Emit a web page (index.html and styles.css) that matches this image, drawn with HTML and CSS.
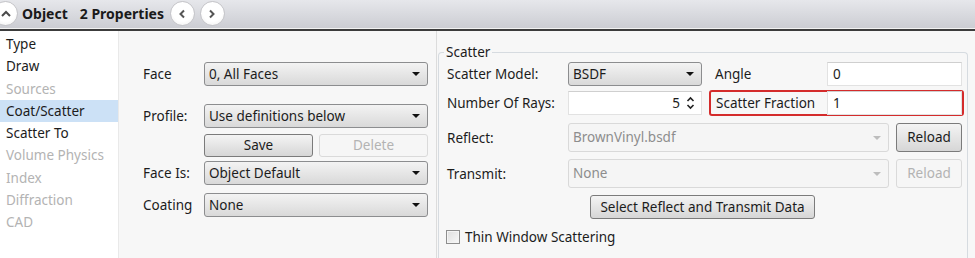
FILE: index.html
```html
<!DOCTYPE html>
<html>
<head>
<meta charset="utf-8">
<link rel="stylesheet" href="styles.css">
</head>
<body>
<header class="titlebar">
  <span class="circ up"><svg width="12" height="8" viewBox="0 0 12 8"><polyline points="2,6 6,2 10,6" fill="none" stroke="#4a4a4a" stroke-width="2"/></svg></span>
  <span class="t-obj">Object</span>
  <span class="t-props">2 Properties</span>
  <span class="circ nav"><svg width="8" height="10" viewBox="0 0 8 10"><polyline points="6,1.5 2.5,5 6,8.5" fill="none" stroke="#555" stroke-width="2"/></svg></span>
  <span class="circ nav"><svg width="8" height="10" viewBox="0 0 8 10"><polyline points="2,1.5 5.5,5 2,8.5" fill="none" stroke="#555" stroke-width="2"/></svg></span>
</header>
<div class="main">
  <nav class="side">
    <div class="item">Type</div>
    <div class="item">Draw</div>
    <div class="item off">Sources</div>
    <div class="item sel">Coat/Scatter</div>
    <div class="item">Scatter To</div>
    <div class="item off">Volume Physics</div>
    <div class="item off">Index</div>
    <div class="item off">Diffraction</div>
    <div class="item off">CAD</div>
  </nav>
  <section class="face">
    <div class="frow r-face"><span class="flabel">Face</span><div class="combo w224">0, All Faces<i class="tri"></i></div></div>
    <div class="frow r-profile"><span class="flabel">Profile:</span><div class="combo w224">Use definitions below<i class="tri"></i></div></div>
    <div class="frow r-btns"><span class="flabel"></span><div class="btn save">Save</div><div class="btn dis del">Delete</div></div>
    <div class="frow r-faceis"><span class="flabel">Face Is:</span><div class="combo w224">Object Default<i class="tri"></i></div></div>
    <div class="frow r-coat"><span class="flabel">Coating</span><div class="combo w224">None<i class="tri"></i></div></div>
  </section>
  <section class="scatter">
    <fieldset class="group">
      <legend>Scatter</legend>
      <div class="srow s1">
        <span class="slabel">Scatter Model:</span>
        <div class="combo w134">BSDF<i class="tri"></i></div>
        <span class="alabel">Angle</span>
        <div class="field w135">0</div>
      </div>
      <div class="srow s2">
        <span class="slabel">Number Of Rays:</span>
        <div class="field num w134"><span class="nval">5</span><svg class="spin" width="9" height="14" viewBox="0 0 9 14"><polyline points="1.5,5 4.5,2 7.5,5" fill="none" stroke="#222" stroke-width="1.6"/><polyline points="1.5,9 4.5,12 7.5,9" fill="none" stroke="#222" stroke-width="1.6"/></svg></div>
        <div class="redbox">
          <span class="rlabel">Scatter Fraction</span>
          <div class="field w135">1</div>
        </div>
      </div>
      <div class="srow s3">
        <span class="slabel">Reflect:</span>
        <div class="combo dis w321">BrownVinyl.bsdf<i class="tri"></i></div>
        <div class="btn reload">Reload</div>
      </div>
      <div class="srow s4">
        <span class="slabel">Transmit:</span>
        <div class="combo dis w321">None<i class="tri"></i></div>
        <div class="btn dis reload">Reload</div>
      </div>
      <div class="srow s5">
        <div class="btn select">Select Reflect and Transmit Data</div>
      </div>
      <div class="srow s6">
        <span class="check"></span><span class="clabel">Thin Window Scattering</span>
      </div>
    </fieldset>
  </section>
</div>
</body>
</html>
```
FILE: styles.css
```css
* { box-sizing: border-box; }
html, body { margin: 0; padding: 0; }
body {
  width: 975px;
  height: 258px;
  overflow: hidden;
  font-family: "Noto Sans", "Open Sans", sans-serif;
  font-size: 13.5px;
  color: #1c1c1c;
  background: #f7f7f7;
}

/* title bar */
.titlebar {
  height: 31px;
  display: flex;
  align-items: center;
  background: linear-gradient(#e6e7eb, #cbccd2);
  border-bottom: 2px solid #3c3c3c;
  box-shadow: inset 0 -1px 0 #f2f2f2;
  padding-bottom: 2px;
}
.circ {
  width: 25px;
  height: 25px;
  border-radius: 50%;
  background: radial-gradient(circle at 50% 40%, #ffffff 55%, #ececec);
  border: 1px solid #c4c4c8;
  display: flex;
  align-items: center;
  justify-content: center;
  flex: none;
}
.circ.up { margin-left: -7px; }
.t-obj { font-weight: 700; font-size: 14px; margin-left: 4px; color: #1a1a1a; }
.t-props { font-weight: 700; font-size: 14px; margin-left: 12px; color: #1a1a1a; }
.circ.nav:nth-of-type(4) { margin-left: 6px; }
.circ.nav:last-child { margin-left: 5px; }

/* main */
.main {
  display: flex;
  height: 227px;
  overflow: hidden;
}
.side {
  width: 119px;
  background: #fff;
  border-right: 1px solid #e9e9e9;
  padding-top: 2px;
  flex: none;
}
.item {
  height: 22.25px;
  line-height: 22.25px;
  padding-left: 6px;
  white-space: nowrap;
}
.item.off { color: #b3b3b3; }
.item.sel { background: #cce1f6; }

/* face section */
.face {
  width: 318px;
  flex: none;
  border-right: 1px solid #dcdcdc;
  padding-top: 31px;
  padding-left: 24px;
}
.frow { display: flex; align-items: center; height: 24px; }
.flabel { width: 61px; flex: none; }
.r-profile { margin-top: 18px; }
.r-btns { margin-top: 6px; height: 23px; }
.r-faceis { margin-top: 4px; }
.r-coat { margin-top: 8px; }

.combo {
  position: relative;
  height: 24px;
  line-height: 22px;
  padding-left: 4px;
  border: 1px solid #8c8d8f;
  border-radius: 3px;
  background: linear-gradient(#f3f3f3, #e6e6e6 50%, #d9d9d9);
  white-space: nowrap;
  flex: none;
}
.combo .tri {
  position: absolute;
  right: 7px;
  top: 9px;
  width: 0;
  height: 0;
  border-left: 4px solid transparent;
  border-right: 4px solid transparent;
  border-top: 4px solid #111;
}
.combo.dis {
  background: #f5f5f5;
  border-color: #d9d9d9;
  color: #8d8d8d;
  height: 29px;
  line-height: 27px;
}
.combo.dis .tri { border-top-color: #bdbdbd; top: 12px; }
.w224 { width: 224px; }
.w134 { width: 134px; }
.w135 { width: 135px; }
.w321 { width: 321px; }

.btn {
  height: 23px;
  line-height: 21px;
  text-align: center;
  border: 1px solid #7b7b7b;
  border-radius: 3px;
  background: linear-gradient(#f4f4f4, #e5e5e5 50%, #d6d6d6);
  white-space: nowrap;
  flex: none;
}
.btn.dis {
  background: #f6f6f6;
  border-color: #dadada;
  color: #b3b3b3;
}
.save { width: 109px; }
.del { width: 109px; margin-left: 6px; }

/* scatter section */
.scatter { flex: 1; padding-left: 1px; }
.group {
  margin: 12px 0 0 0;
  width: 529px;
  border: 1px solid #d6dbe0;
  border-bottom: none;
  border-radius: 4px 4px 0 0;
  padding: 1px 3px 0 8px;
  height: 215px;
}
.group legend {
  padding: 0 2px;
  margin-left: -3px;
  line-height: 18px;
}
.srow { display: flex; align-items: center; }
.slabel { width: 121px; flex: none; }
.s1 { height: 24px; }
.s2 { margin-top: 4px; height: 26px; }
.s3 { margin-top: 7px; height: 29px; }
.s4 { margin-top: 7px; height: 29px; }
.s5 { margin-top: 7px; height: 24px; }
.s6 { margin-top: 10px; height: 16px; }

.alabel { width: 112px; margin-left: 13px; flex: none; }
.field {
  height: 24px;
  line-height: 22px;
  padding-left: 5px;
  background: #fff;
  border: 1px solid #e2e2e2;
  border-top-color: #cfcfcf;
  flex: none;
}
.field.num {
  display: flex;
  align-items: center;
  justify-content: flex-end;
  padding-right: 6px;
}
.nval { margin-right: 6px; }
.redbox {
  margin-left: 7px;
  width: 255px;
  height: 26px;
  border: 2px solid #d42b2b;
  border-radius: 3px;
  display: flex;
  align-items: center;
}
.rlabel { width: 116px; padding-left: 5px; flex: none; }
.reload { width: 66px; height: 29px; line-height: 27px; margin-left: 7px; }
.select { width: 225px; height: 24px; line-height: 22px; margin-left: 143px; }
.check {
  width: 14px;
  height: 14px;
  margin-left: -1px;
  border: 1px solid #8e8e8e;
  background: linear-gradient(135deg, #dedede, #f8f8f8);
  box-shadow: inset 0 0 0 1px #f4f4f4;
  flex: none;
}
.clabel { margin-left: 5px; }
```
